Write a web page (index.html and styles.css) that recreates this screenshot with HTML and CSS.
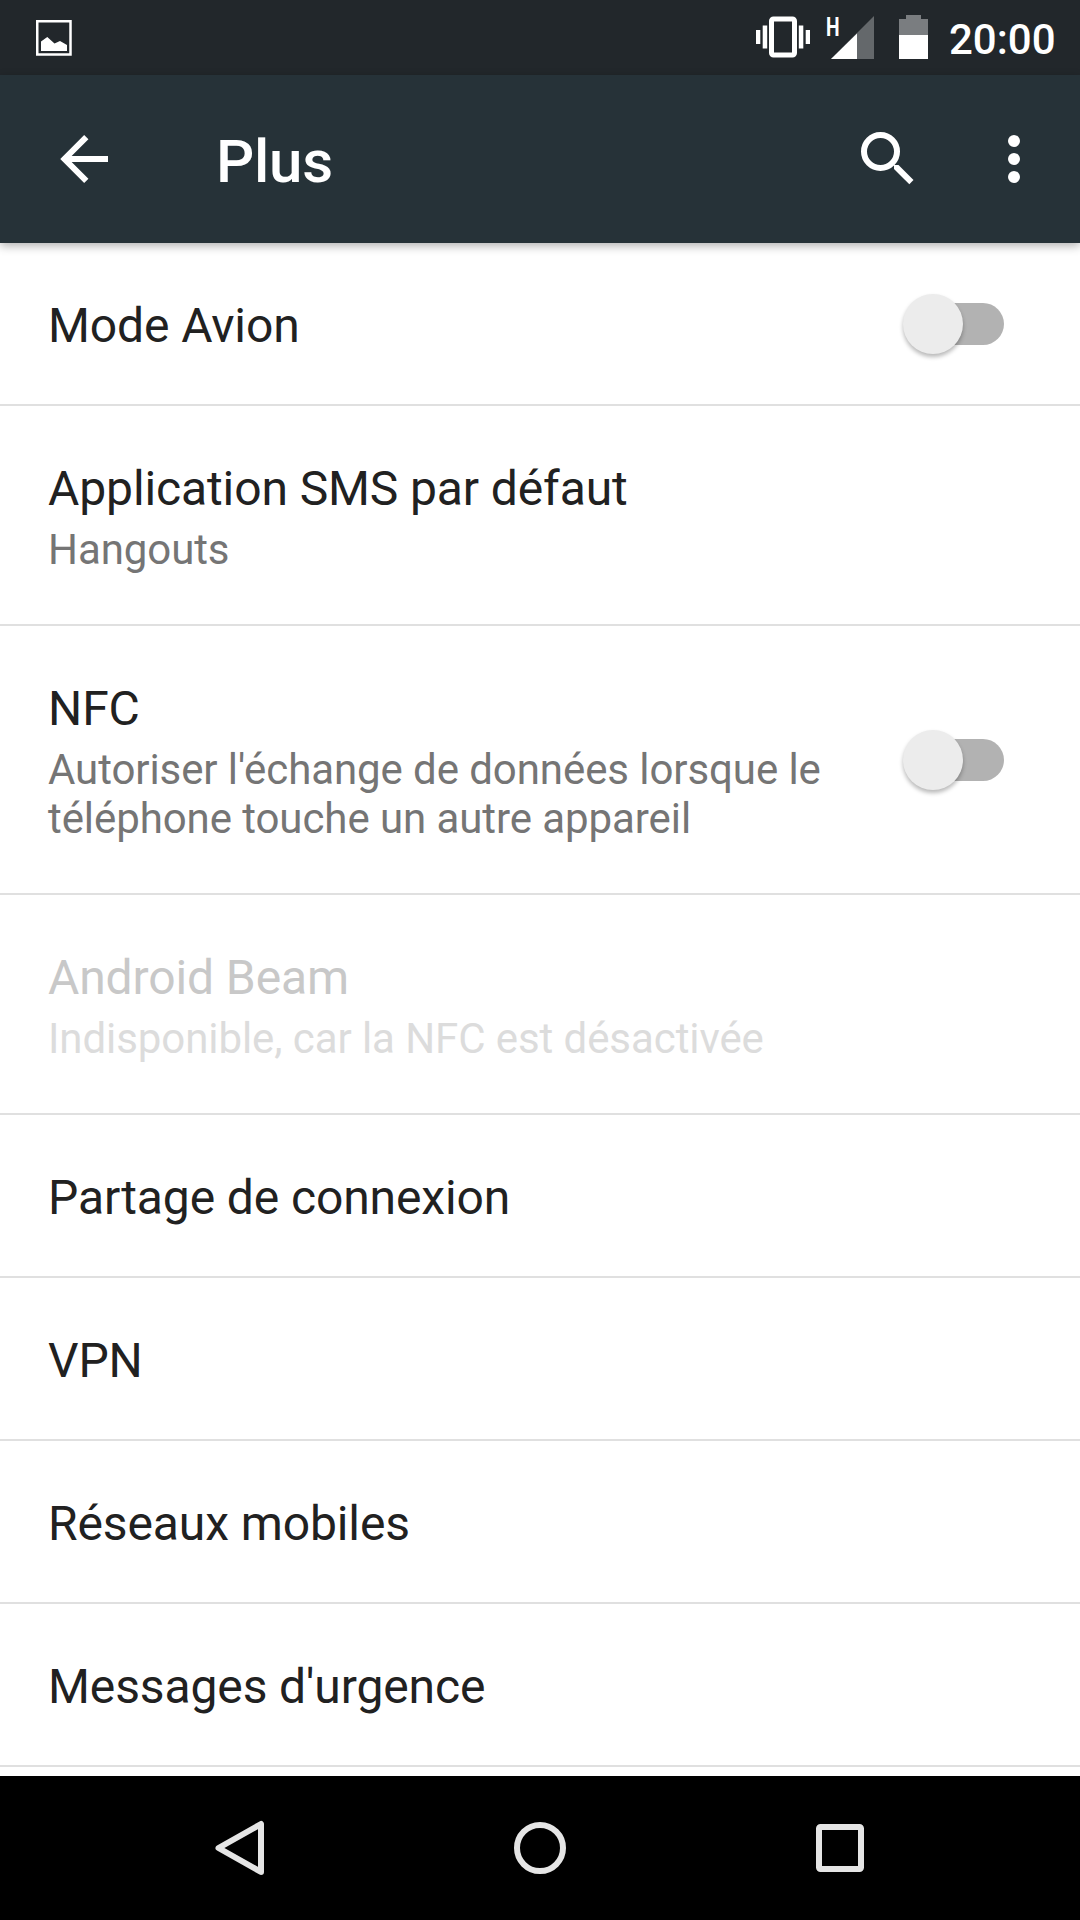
FILE: index.html
```html
<!DOCTYPE html>
<html lang="fr">
<head>
<meta charset="utf-8">
<title>Plus</title>
<link rel="stylesheet" href="styles.css">
</head>
<body>
<div class="screen">
  <div class="status">
    <svg class="status-photo" width="36" height="36" viewBox="0 0 36 36">
      <rect x="1.25" y="1.25" width="33.25" height="33.25" fill="none" stroke="#fff" stroke-width="2.5"/>
      <path d="M5 31V21.5L11.3 17L18.5 23.5L24 21L31 25V31Z" fill="#fff"/>
    </svg>
    <svg class="status-icons" width="174" height="75" viewBox="0 0 174 75">
      <g fill="#fff">
        <rect x="0" y="30" width="4.3" height="14"/>
        <rect x="6.7" y="25.5" width="4.5" height="23"/>
        <rect x="42.8" y="25.5" width="4.5" height="23"/>
        <rect x="49.7" y="30" width="4.3" height="14"/>
      </g>
      <rect x="15.5" y="19" width="23" height="36" rx="2" fill="none" stroke="#fff" stroke-width="5"/>
      <text class="network" transform="translate(70 35.7) scale(.74 1)">H</text>
      <path d="M75 59L118 16V59Z" fill="#64686b"/>
      <path d="M75 59L101 33.5V59Z" fill="#fff"/>
      <path d="M143 19H150V15H165V19H172V35H143Z" fill="#7a7d80"/>
      <rect x="143" y="35" width="29" height="24" fill="#fff"/>
    </svg>
    <span class="clock">20:00</span>
  </div>

  <header class="toolbar">
    <svg class="back" width="48" height="48" viewBox="0 0 48 48">
      <path d="M48 24H6M26.3 2.2L4.5 24L26.3 45.8" fill="none" stroke="#fff" stroke-width="6"/>
    </svg>
    <h1 class="heading">Plus</h1>
    <svg class="search" width="54" height="54" viewBox="0 0 54 54">
      <circle cx="19.5" cy="19.5" r="16.5" fill="none" stroke="#fff" stroke-width="6"/>
      <path d="M33 33H37.5L52.5 48L48.3 52.3L33 37Z" fill="#fff"/>
    </svg>
    <svg class="more" width="12" height="48" viewBox="0 0 12 48" fill="#fff">
      <circle cx="6" cy="6" r="6"/><circle cx="6" cy="24" r="6"/><circle cx="6" cy="42" r="6"/>
    </svg>
  </header>

  <main class="list">
    <div class="row">
      <div class="text"><div class="title">Mode Avion</div></div>
      <div class="switch"><div class="thumb"></div></div>
    </div>
    <div class="row double">
      <div class="text"><div class="title">Application SMS par défaut</div><div class="summary">Hangouts</div></div>
    </div>
    <div class="row double">
      <div class="text"><div class="title">NFC</div><div class="summary">Autoriser l'échange de données lorsque le téléphone touche un autre appareil</div></div>
      <div class="switch"><div class="thumb"></div></div>
    </div>
    <div class="row double disabled">
      <div class="text"><div class="title">Android Beam</div><div class="summary">Indisponible, car la NFC est désactivée</div></div>
    </div>
    <div class="row"><div class="text"><div class="title">Partage de connexion</div></div></div>
    <div class="row"><div class="text"><div class="title">VPN</div></div></div>
    <div class="row"><div class="text"><div class="title">Réseaux mobiles</div></div></div>
    <div class="row"><div class="text"><div class="title">Messages d'urgence</div></div></div>
  </main>

  <nav class="navbar">
    <svg width="60" height="60" viewBox="0 0 60 60"><path d="M51 6V54L8.5 30Z"/></svg>
    <svg width="60" height="60" viewBox="0 0 60 60"><circle cx="30" cy="30" r="23"/></svg>
    <svg width="60" height="60" viewBox="0 0 60 60"><rect x="9" y="9" width="42" height="42" rx="1.5"/></svg>
  </nav>
</div>
</body>
</html>
```

FILE: styles.css
```css
* { box-sizing: border-box; }
body { margin: 0; font-family: Roboto, sans-serif; background: #fff; }
svg { display: block; flex: none; }

.screen {
  display: flex;
  flex-direction: column;
  width: 1080px;
  height: 1920px;
  overflow: hidden;
}

.status {
  display: flex;
  align-items: center;
  flex: none;
  height: 75px;
  padding-left: 36px;
  background: #22272b;
  color: #fff;
}
.status-photo { margin-top: 1px; }
.status-icons { margin-left: 684px; }
.network { font-size: 26px; font-weight: 700; fill: #fff; }
.clock { margin: 5px 0 0 19px; font-size: 42px; font-weight: 500; line-height: 50px; }

.toolbar {
  display: flex;
  align-items: center;
  flex: none;
  height: 168px;
  padding-left: 60px;
  background: #263238;
  color: #fff;
  box-shadow: 0 3px 9px rgba(0, 0, 0, .3);
}
.heading { flex: 1; margin: 6px 0 0 108px; font-size: 60px; font-weight: 500; line-height: 70px; letter-spacing: -.25px; }
.search { margin-right: 93px; }
.more { margin-right: 60px; }

.list { flex: 1; min-height: 0; }
.row {
  display: flex;
  align-items: center;
  justify-content: space-between;
  height: 163px;
  padding: 0 76px 0 48px;
  border-bottom: 2px solid #e0e0e0;
}
.row:not(.double) .text { padding-top: 4px; }
.double { height: auto; padding-top: 50px; padding-bottom: 50px; }
.text { max-width: 800px; }
.title { font-size: 48px; line-height: 65px; letter-spacing: -.11px; color: #212121; }
.summary { margin-top: 4px; font-size: 42px; line-height: 49px; letter-spacing: -.08px; color: #757575; }
.disabled .title { color: #c8c8c8; }
.disabled .summary { color: #dcdcdc; }

.switch {
  display: flex;
  align-items: center;
  width: 90px;
  height: 42px;
  border-radius: 21px;
  background: #b2b2b2;
}
.thumb {
  flex: none;
  width: 60px;
  height: 60px;
  margin-left: -11.5px;
  border-radius: 50%;
  background: #ececec;
  box-shadow: 0 3px 4px rgba(0, 0, 0, .28);
}

.navbar {
  display: flex;
  align-items: center;
  justify-content: center;
  gap: 240px;
  flex: none;
  height: 144px;
  background: #000;
}
.navbar svg { fill: none; stroke: #e5e5e5; stroke-width: 6; stroke-linejoin: round; }
```
